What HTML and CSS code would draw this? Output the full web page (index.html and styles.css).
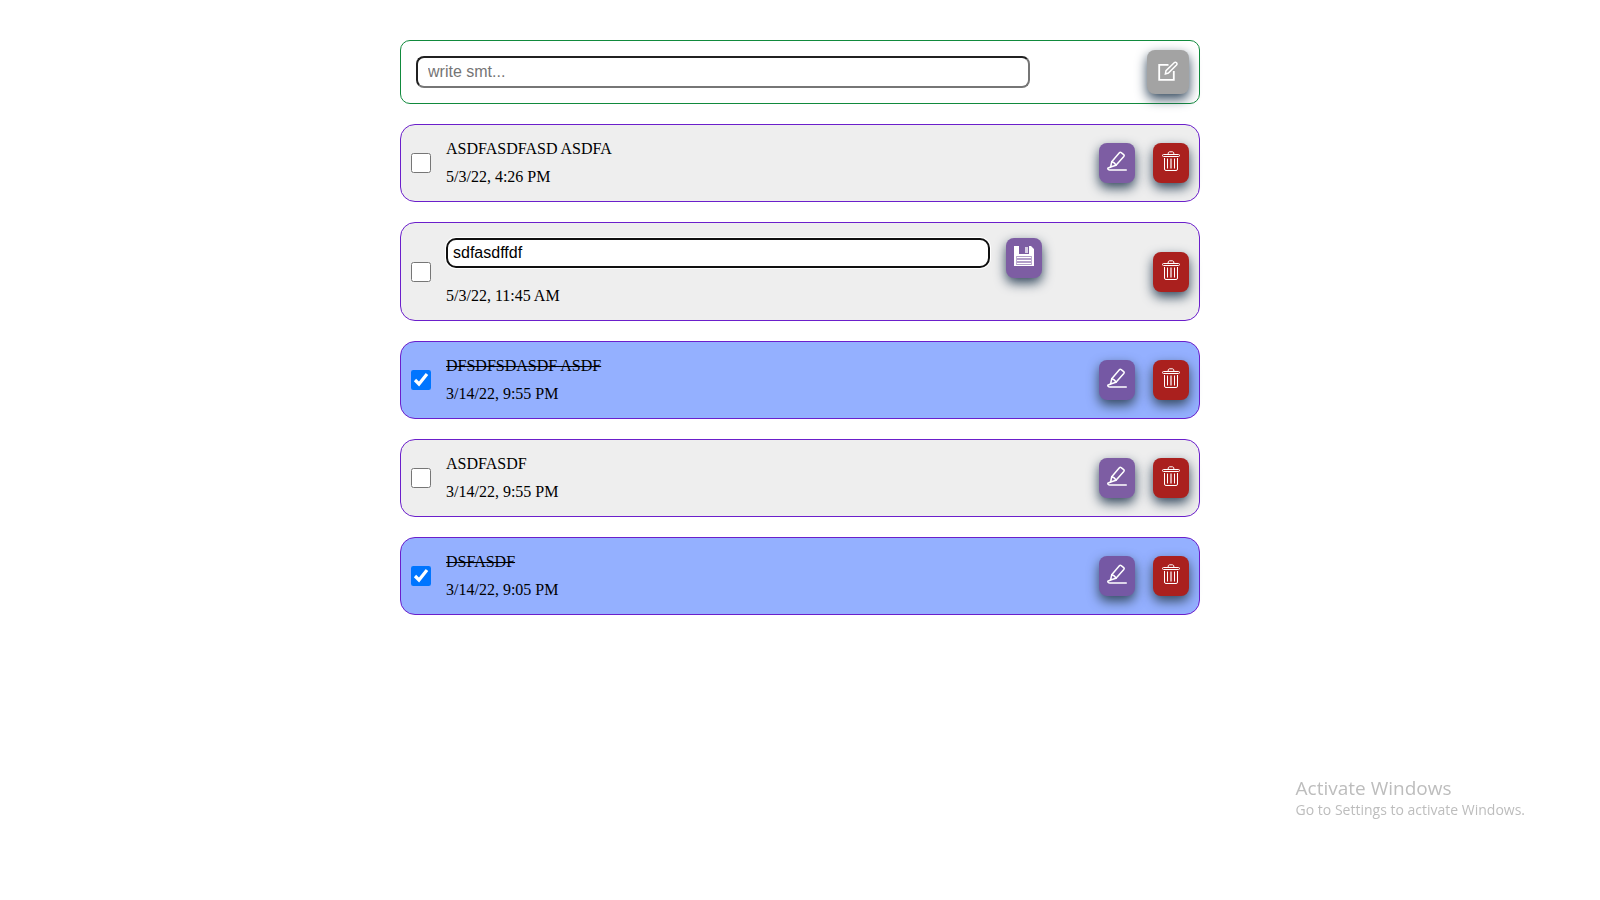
FILE: index.html
```html
<!DOCTYPE html>
<html lang="en">
<head>
<meta charset="utf-8">
<title>Todo list</title>
<link rel="stylesheet" href="styles.css">
</head>
<body>
<svg class="sprite" aria-hidden="true">
  <symbol id="icon-form" viewBox="0 0 20 20" fill="none" stroke="currentColor" stroke-width="1.800">
    <path d="M10.500 3.800H1.200V18.800H15.800V10"/>
    <path d="M7.400 12.900L8 9.700L16.200 1.700Q17.400 .7 18.500 1.700Q19.500 2.900 18.500 4.100L10.400 12Z" stroke-width="1.500"/>
  </symbol>
  <symbol id="icon-edit" viewBox="0 0 20 20" fill="none" stroke="currentColor" stroke-width="1.500" stroke-linecap="round" stroke-linejoin="round">
    <path d="M3.600 16L4.700 10.800L12.400 1.700Q13.200 .9 14.200 1.600L16.700 3.600Q17.600 4.400 16.800 5.400L9 14.300Z"/>
    <path d="M4.700 10.800Q7.600 11.200 9 14.300"/>
    <path d="M3.600 16L.8 17.200Q.7 19 2.800 19H19.300"/>
  </symbol>
  <symbol id="icon-trash" viewBox="0 0 20 20" fill="none" stroke="currentColor">
    <rect x="1.500" y="3.500" width="17" height="2" rx="1"/>
    <path d="M7 3.500Q7 .8 8.500 .8H11.500Q13 .8 13 3.500"/>
    <path d="M3.500 7V18Q3.500 19.500 5 19.500H15Q16.500 19.500 16.500 18V7M6.500 7.500V17.500M13.500 7.500V17.500"/>
    <path d="M10 7.500V17.500" stroke-width="2" opacity=".6"/>
  </symbol>
  <symbol id="icon-save" viewBox="0 0 20 20" fill="currentColor">
    <path fill-rule="evenodd" d="M0 0H5V8H15V0H17L20 3V20H0ZM2.500 10V19H17.500V10Z"/>
    <path d="M11 1H14V7H11Z" opacity=".7"/>
    <path d="M3 11H17V12H3ZM3 14H17V15H3ZM3 17H17V18H3Z"/>
    <path d="M3 10H17V19H3Z" opacity=".4"/>
  </symbol>
</svg>

<main class="board">
  <form class="composer">
    <input class="composer-input" type="text" placeholder="write smt..." aria-label="New item">
    <button class="btn btn-add" type="button" aria-label="Add" disabled><svg class="icon"><use href="#icon-form"/></svg></button>
  </form>

  <ul class="list">
    <li class="card">
      <input class="check" type="checkbox" id="t1">
      <div class="body"><label class="line" for="t1">ASDFASDFASD ASDFA</label><time class="line">5/3/22, 4:26 PM</time></div>
      <div class="actions">
        <button class="btn btn-edit" type="button" aria-label="Edit"><svg class="icon"><use href="#icon-edit"/></svg></button>
        <button class="btn btn-delete" type="button" aria-label="Delete"><svg class="icon"><use href="#icon-trash"/></svg></button>
      </div>
    </li>
    <li class="card">
      <input class="check" type="checkbox" aria-label="Done">
      <div class="body">
        <div class="editor">
          <input class="editor-input" type="text" value="sdfasdffdf" aria-label="Item text">
          <button class="btn btn-edit" type="button" aria-label="Save"><svg class="icon"><use href="#icon-save"/></svg></button>
        </div>
        <time class="line">5/3/22, 11:45 AM</time>
      </div>
      <div class="actions">
        <button class="btn btn-delete" type="button" aria-label="Delete"><svg class="icon"><use href="#icon-trash"/></svg></button>
      </div>
    </li>
    <li class="card done">
      <input class="check" type="checkbox" id="t3" checked>
      <div class="body"><label class="line" for="t3">DFSDFSDASDF ASDF</label><time class="line">3/14/22, 9:55 PM</time></div>
      <div class="actions">
        <button class="btn btn-edit" type="button" aria-label="Edit"><svg class="icon"><use href="#icon-edit"/></svg></button>
        <button class="btn btn-delete" type="button" aria-label="Delete"><svg class="icon"><use href="#icon-trash"/></svg></button>
      </div>
    </li>
    <li class="card">
      <input class="check" type="checkbox" id="t4">
      <div class="body"><label class="line" for="t4">ASDFASDF</label><time class="line">3/14/22, 9:55 PM</time></div>
      <div class="actions">
        <button class="btn btn-edit" type="button" aria-label="Edit"><svg class="icon"><use href="#icon-edit"/></svg></button>
        <button class="btn btn-delete" type="button" aria-label="Delete"><svg class="icon"><use href="#icon-trash"/></svg></button>
      </div>
    </li>
    <li class="card done">
      <input class="check" type="checkbox" id="t5" checked>
      <div class="body"><label class="line" for="t5">DSFASDF</label><time class="line">3/14/22, 9:05 PM</time></div>
      <div class="actions">
        <button class="btn btn-edit" type="button" aria-label="Edit"><svg class="icon"><use href="#icon-edit"/></svg></button>
        <button class="btn btn-delete" type="button" aria-label="Delete"><svg class="icon"><use href="#icon-trash"/></svg></button>
      </div>
    </li>
  </ul>
</main>

<aside class="watermark">
  <p class="watermark-title">Activate Windows</p>
  <p class="watermark-text">Go to Settings to activate Windows.</p>
</aside>
</body>
</html>
```
FILE: styles.css
```css
* {
  box-sizing: border-box;
}

body {
  margin: 0;
  background: #fff;
  color: #000;
  font: 16px/28px "Liberation Serif", "Times New Roman", serif;
}

.sprite {
  display: none;
}

.board {
  width: 50%;
  margin: 40px auto;
}

.composer {
  display: flex;
  align-items: center;
  justify-content: space-between;
  padding: 9px 10px 9px 15px;
  border: 1px solid #118a3d;
  border-radius: 10px;
}

.composer-input,
.editor-input {
  font: 16px "Liberation Sans", Arial, sans-serif;
  color: #000;
  background: #fff;
}

.composer-input {
  width: calc(80% - 4px);
  height: 32px;
  padding: 0 10px;
  border: 2px inset #767676;
  border-radius: 8px;
}

.composer-input::placeholder {
  color: #757575;
}

.list {
  display: flex;
  flex-direction: column;
  gap: 20px;
  margin: 20px 0 0;
  padding: 0;
  list-style: none;
}

.card {
  display: flex;
  align-items: center;
  gap: 15px;
  padding: 10px;
  border: 1px solid #6b1fcb;
  border-radius: 15px;
  background: #eee;
}

.done {
  background: #94b0ff;
}

.done label {
  text-decoration: line-through;
}

.check {
  flex: none;
  width: 20px;
  height: 20px;
  margin: 0;
  accent-color: #0075ff;
}

.body {
  flex: 1;
  min-width: 0;
}

.line {
  display: block;
  width: max-content;
}

.editor {
  display: flex;
  align-items: flex-start;
  gap: 16px;
  padding: 5px 0 4px;
}

.editor-input {
  width: calc(80% - 10px);
  height: 30px;
  padding: 0 5px;
  border: 2px solid #101010;
  border-radius: 10px;
  box-shadow: 0 0 0 1px #fff;
}

.actions {
  display: flex;
  gap: 18px;
}

.btn {
  display: flex;
  flex: none;
  align-items: flex-start;
  justify-content: center;
  width: 36px;
  height: 40px;
  padding: 8px;
  border: 0;
  border-radius: 8px;
  color: #fff;
  box-shadow: 0 5px 12px #34495e;
}

.btn-edit {
  background: #7d5da3;
}

.done .btn-edit {
  background: #7558a4;
}

.btn-delete {
  background: #aa201e;
}

.btn-add {
  width: 42px;
  height: 44px;
  padding: 11px;
  background: #a3a3a3;
}

.icon {
  flex: none;
  width: 20px;
  height: 20px;
}

.watermark {
  position: fixed;
  right: 75px;
  bottom: 80px;
  color: #bdbdbd;
  font-family: "Open Sans", sans-serif;
}

.watermark p {
  margin: 0;
}

.watermark-title {
  font-size: 19px;
  line-height: 24px;
}

.watermark-text {
  font-size: 14px;
  line-height: 20px;
}
```
